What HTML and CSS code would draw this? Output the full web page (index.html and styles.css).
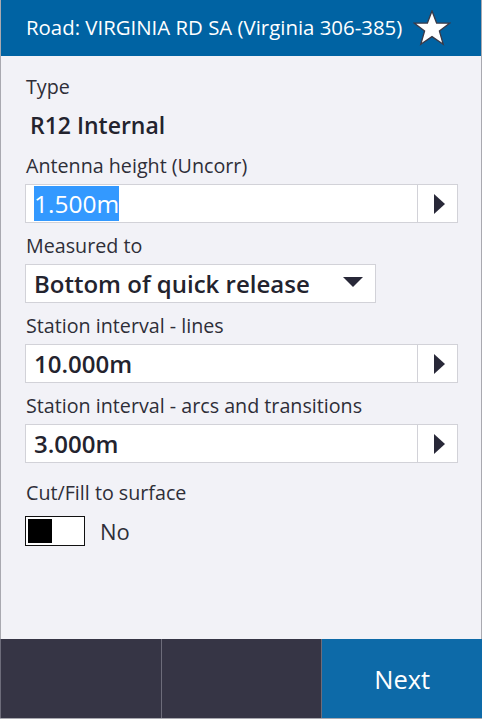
FILE: index.html
```html
<!DOCTYPE html>
<html>
<head>
<meta charset="utf-8">
<link rel="stylesheet" href="styles.css">
</head>
<body>
<div class="window">
  <header class="header">
    <span class="title">Road: VIRGINIA RD SA (Virginia 306-385)</span>
    <svg class="star" width="38" height="36" viewBox="0 0 38 36">
      <polygon points="19,1 23.6,13 36.6,13.2 26.4,21 30.2,34.2 19,26.6 7.8,34.2 11.6,21 1.4,13.2 14.4,13" fill="#ffffff" stroke="#3a3a48" stroke-width="1.3" stroke-linejoin="miter"/>
    </svg>
  </header>
  <main class="content">
    <div class="label first">Type</div>
    <div class="static-value">R12 Internal</div>

    <div class="label">Antenna height (Uncorr)</div>
    <div class="field">
      <div class="field-text"><span class="selected">1.500m</span></div>
      <div class="field-btn"><span class="tri-right"></span></div>
    </div>

    <div class="label">Measured to</div>
    <div class="dropdown">
      <span class="dropdown-text">Bottom of quick release</span>
      <span class="tri-down"></span>
    </div>

    <div class="label">Station interval - lines</div>
    <div class="field">
      <div class="field-text">10.000m</div>
      <div class="field-btn"><span class="tri-right"></span></div>
    </div>

    <div class="label">Station interval - arcs and transitions</div>
    <div class="field">
      <div class="field-text">3.000m</div>
      <div class="field-btn"><span class="tri-right"></span></div>
    </div>

    <div class="label cut">Cut/Fill to surface</div>
    <div class="toggle-row">
      <div class="toggle"><span class="knob"></span></div>
      <span class="toggle-text">No</span>
    </div>
  </main>
  <footer class="footer">
    <div class="fbtn"></div>
    <div class="fbtn"></div>
    <div class="fbtn next">Next</div>
  </footer>
</div>
</body>
</html>
```

FILE: styles.css
```css
html, body {
  margin: 0;
  padding: 0;
  background: #ffffff;
}
body {
  font-family: "Open Sans", "Noto Sans", sans-serif;
  width: 485px;
  height: 720px;
  overflow: hidden;
}
.window {
  box-sizing: border-box;
  width: 482px;
  height: 719px;
  border-left: 1px solid #a9a9b0;
  border-right: 1px solid #a9a9b0;
  border-bottom: 1px solid #a9a9b0;
  display: flex;
  flex-direction: column;
  background: #f2f2f7;
}
.header {
  height: 56px;
  flex: none;
  background: #0063a3;
  display: flex;
  align-items: center;
  padding-left: 25px;
  padding-right: 30px;
  color: #ffffff;
}
.title {
  font-size: 20.4px;
  flex: 1;
  white-space: nowrap;
  margin-top: -3px;
}
.star {
  flex: none;
  margin-top: -1px;
}
.content {
  flex: 1;
  padding: 0 23px 0 24px;
  display: flex;
  flex-direction: column;
  color: #2e2e38;
}
.label {
  font-size: 19.7px;
  line-height: 24px;
  height: 24px;
  margin-top: 11px;
  margin-bottom: 6px;
  padding-left: 1px;
  white-space: nowrap;
}
.label.first {
  margin-top: 19px;
  margin-bottom: 0;
}
.label.cut {
  margin-top: 18px;
  margin-bottom: 11px;
}
.static-value {
  font-size: 23px;
  font-weight: 600;
  line-height: 28px;
  padding-left: 5px;
  margin-top: 12px;
  margin-bottom: 4px;
  color: #23232e;
}
.field {
  box-sizing: border-box;
  height: 39px;
  background: #ffffff;
  border: 1px solid #d2d2d8;
  display: flex;
}
.field-text {
  flex: 1;
  font-size: 24px;
  font-weight: 600;
  line-height: 37px;
  padding-left: 8px;
  color: #23232e;
}
.selected {
  background: #3399ff;
  color: #ffffff;
  padding: 1px 0;
  font-size: 24.5px;
  font-weight: 400;
}
.field-btn {
  width: 39px;
  border-left: 1px solid #d2d2d8;
  display: flex;
  align-items: center;
  justify-content: center;
}
.tri-right {
  width: 0;
  height: 0;
  border-top: 10px solid transparent;
  border-bottom: 10px solid transparent;
  border-left: 11px solid #282838;
  margin-left: 3px;
}
.dropdown {
  box-sizing: border-box;
  width: 351px;
  height: 39px;
  background: #ffffff;
  border: 1px solid #d2d2d8;
  display: flex;
  align-items: center;
  padding-left: 8px;
  padding-right: 12px;
}
.dropdown-text {
  flex: 1;
  font-size: 24px;
  font-weight: 600;
  color: #23232e;
  white-space: nowrap;
}
.tri-down {
  width: 0;
  height: 0;
  border-left: 10px solid transparent;
  border-right: 10px solid transparent;
  border-top: 10px solid #282838;
  margin-top: -3px;
}
.toggle-row {
  display: flex;
  align-items: center;
  height: 30px;
}
.toggle {
  box-sizing: border-box;
  width: 60px;
  height: 30px;
  border: 1px solid #111111;
  background: #ffffff;
  padding: 2px;
}
.knob {
  display: block;
  width: 24px;
  height: 24px;
  background: #000000;
}
.toggle-text {
  font-size: 22px;
  margin-left: 15px;
  color: #2e2e38;
}
.footer {
  height: 79px;
  flex: none;
  display: flex;
  background: #363545;
  margin-left: -1px;
  margin-right: -1px;
}
.fbtn {
  flex: 1;
  border-left: 1px solid #6d6c7a;
}
.next {
  background: #0d6aa8;
  color: #ffffff;
  font-size: 25.5px;
  display: flex;
  align-items: center;
  justify-content: center;
}
```
